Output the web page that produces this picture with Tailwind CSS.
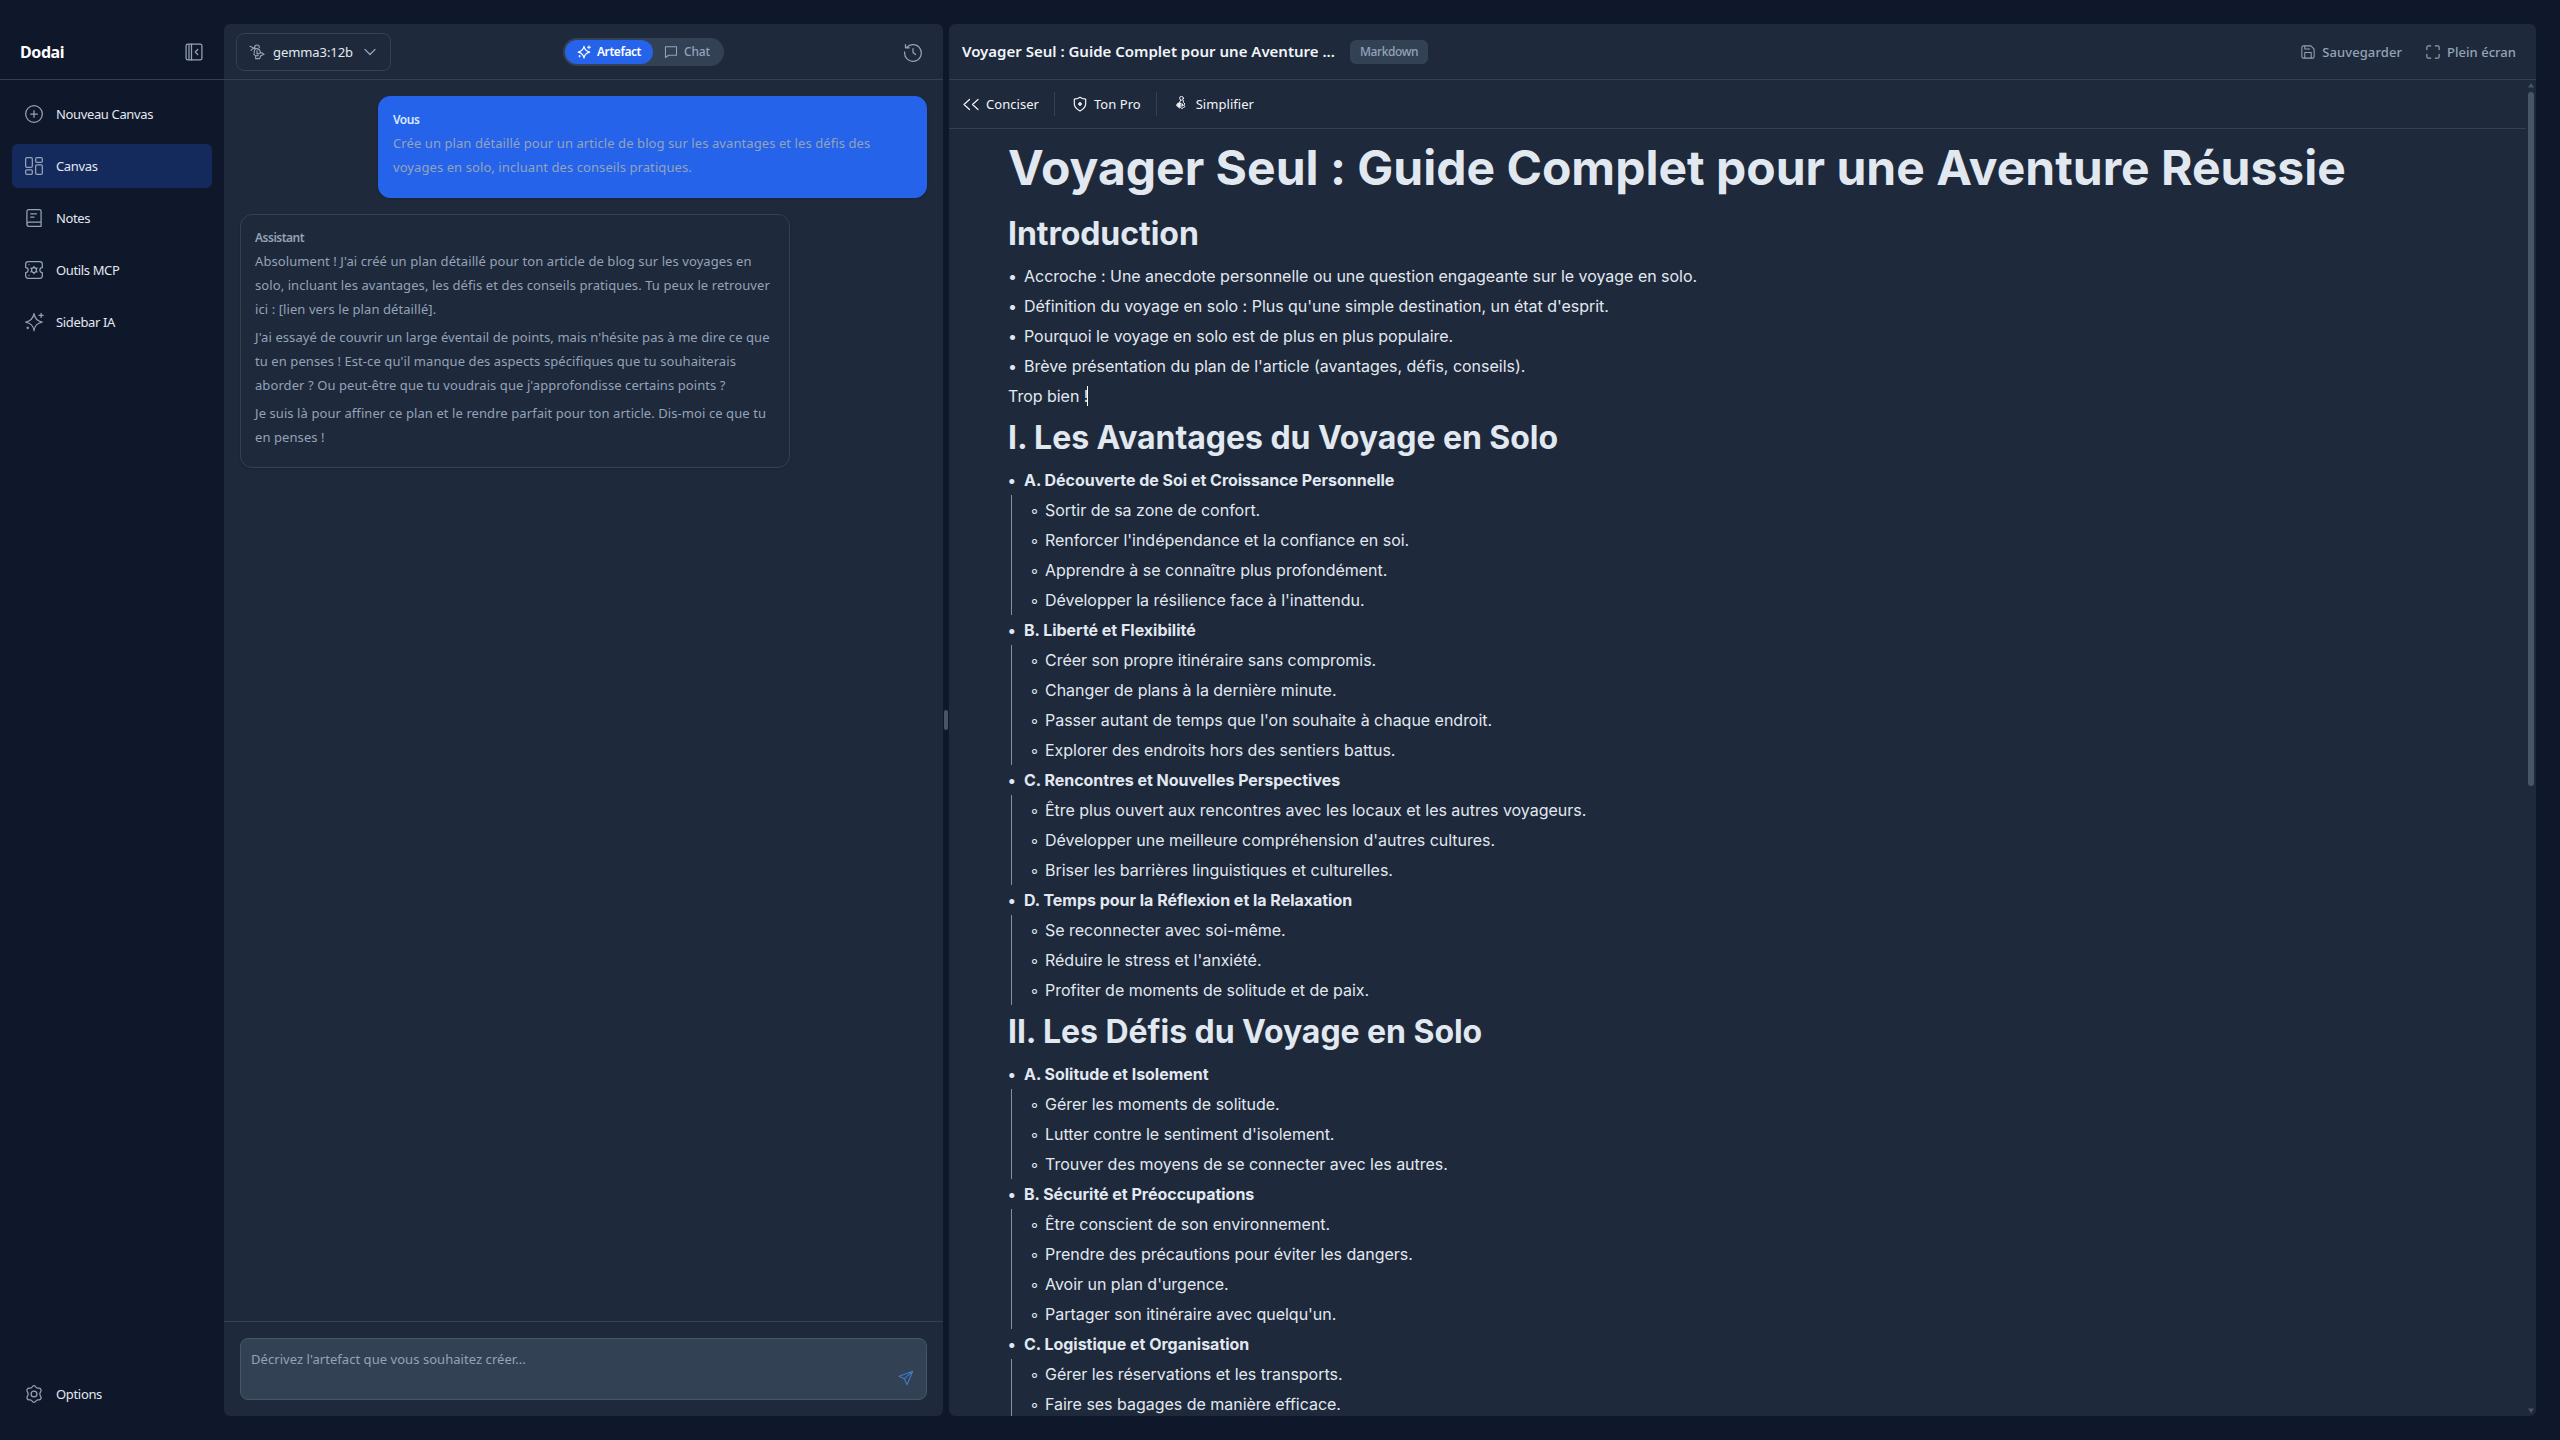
<!DOCTYPE html>
<html lang="fr">
<head>
<meta charset="utf-8">
<title>Dodai</title>
<script src="https://cdn.jsdelivr.net/npm/@tailwindcss/browser@4"></script>
</head>
<body class="h-[1440px] w-[2560px] overflow-hidden bg-[#0f172a] font-['Noto_Sans',sans-serif] text-sm text-[#e2e8f0]">
<div class="flex h-full py-6 pr-6">

  <!-- Navigation latérale -->
  <aside class="flex w-56 flex-col">
    <div class="flex h-14 items-center justify-between border-b border-[#334155] pr-5 pl-5">
      <h1 class="pt-px text-base font-bold tracking-[-0.4px] text-white">Dodai</h1>
      <svg class="size-5 text-[#94a3b8]" viewBox="0 0 24 24" fill="none" stroke="currentColor" stroke-width="1.5" stroke-linecap="round" stroke-linejoin="round"><rect x="2.5" y="2.5" width="19" height="19" rx="2"/><path d="M9 2.500v19M6 3v18M16.500 9l-3 3l3 3"/></svg>
    </div>
    <nav class="flex flex-1 flex-col gap-2 px-3 pt-3 text-[13px] tracking-[-0.36px] text-[#e2e8f0] [&_svg]:size-5 [&_svg]:text-[#94a3b8]">
      <a class="flex h-11 items-center gap-3 rounded-md px-3"><svg viewBox="0 0 24 24" fill="none" stroke="currentColor" stroke-width="1.5" stroke-linecap="round"><circle cx="12" cy="12" r="10"/><path d="M12 8v8M8 12h8"/></svg><span>Nouveau Canvas</span></a>
      <a class="flex h-11 items-center gap-3 rounded-md bg-[#152a5c] px-3"><svg viewBox="0 0 24 24" fill="none" stroke="currentColor" stroke-width="1.5"><rect x="2" y="2" width="8" height="11.500" rx="1.500"/><rect x="2" y="16.500" width="8" height="5.500" rx="1.500"/><rect x="14" y="2" width="8" height="5.500" rx="1.500"/><rect x="14" y="10.500" width="8" height="11.500" rx="1.500"/></svg><span>Canvas</span></a>
      <a class="flex h-11 items-center gap-3 rounded-md px-3"><svg viewBox="0 0 24 24" fill="none" stroke="currentColor" stroke-width="1.5" stroke-linecap="round" stroke-linejoin="round"><path d="M20.500 17V4a2 2 0 0 0-2-2h-13a2 2 0 0 0-2 2v15.500M20.500 17H6a2.500 2.500 0 0 0 0 5h14.500V17M15 7H8M12 11H8"/></svg><span>Notes</span></a>
      <a class="flex h-11 items-center gap-3 rounded-md px-3"><svg viewBox="0 0 24 24" fill="none" stroke="currentColor" stroke-width="1.5" stroke-linecap="round" stroke-linejoin="round"><path d="M2 9V5a3 3 0 0 1 3-3h14a3 3 0 0 1 3 3v4a3 3 0 0 0 0 6v4a3 3 0 0 1-3 3H5a3 3 0 0 1-3-3v-4a3 3 0 0 0 0-6z"/><circle cx="12" cy="12" r="3"/><path d="M12 7.500V9M12 15v1.500M8.100 9.700l1.300.8M14.600 13.500l1.300.8M8.100 14.300l1.300-.8M14.600 10.500l1.300-.8M6 5.500h.01M6 18.500h.01"/></svg><span>Outils MCP</span></a>
      <a class="flex h-11 items-center gap-3 rounded-md px-3"><svg viewBox="0 0 24 24" fill="none" stroke="currentColor" stroke-width="1.5" stroke-linecap="round" stroke-linejoin="round"><path d="M12 2c.9 6 3.500 8.700 9.800 10.200C15.500 13.500 12.900 16 12 22.500C11 16 8.300 13.500 2 12.200C8.300 10.700 11 8 12 2z"/><path d="M20.500 1.500v5M18 4h5M3.500 19h2M4.500 18v2"/></svg><span>Sidebar IA</span></a>
    </nav>
    <div class="px-3"><a class="flex h-11 items-center gap-3 px-3 text-[13px] tracking-[-0.33px]"><svg class="size-5 text-[#94a3b8]" viewBox="0 0 24 24" fill="none" stroke="currentColor" stroke-width="1.5" stroke-linejoin="round"><path d="M9.700 3.600C10.400 2.300 11 2 12 2s1.600.3 2.300 1.600c.7 1.200 1.500 1.600 2.900 1.400c1.600-.2 2.200 0 2.900 1.200c.8 1.300.8 2-.2 3.200c-.8 1.200-.9 1.900-.9 2.600s.1 1.400.9 2.600c1 1.200 1 1.900.2 3.200c-.7 1.200-1.300 1.400-2.900 1.200c-1.400-.2-2.200.2-2.900 1.400C13.600 21.700 13 22 12 22s-1.600-.3-2.300-1.600C9 19.200 8.200 18.800 6.800 19c-1.600.2-2.200 0-2.900-1.200c-.8-1.300-.8-2 .2-3.200c.8-1.200.9-1.900.9-2.600s-.1-1.400-.9-2.600c-1-1.200-1-1.900-.2-3.200C4.600 5 5.200 4.800 6.800 5C8.200 5.200 9 4.800 9.700 3.600z"/><circle cx="12" cy="12" r="3.500"/></svg><span>Options</span></a></div>
  </aside>

  <!-- Conversation -->
  <section class="flex w-[719px] flex-col overflow-hidden rounded-md bg-[#1e293b]">
    <header class="flex h-14 items-center justify-between border-b border-[#334155] pr-5 pl-3">
      <button class="flex h-[38px] w-[155px] items-center rounded-lg border border-[#334155] pl-3">
        <svg class="size-4 text-[#94a3b8]" viewBox="0 0 24 24" fill="none" stroke="currentColor" stroke-width="1.700" stroke-linecap="round" stroke-linejoin="round"><path d="M1.500 3.500C4 4.500 6 6 8 6C8.500 3 10 1.500 12 1.500S15.500 3 15.500 5.500M3 9.500C5 7 8 6 10.500 6.500C14 7 17 9.500 17.500 13.500M10 7C8 9 7.500 11 8 13.500M12 10v5c2 0 4-1 5-2c2.500 0 4 1.500 5.500 2.500M17 18l5.500-2.500M7 15c1.500 2.500 4 3 7 2.500M10 18v4h6l1.500-4"/></svg>
        <span class="ml-2 pt-px text-[13px] tracking-[-0.07px]">gemma3:12b</span>
        <svg class="ml-auto mr-3.5 h-3 w-3 text-[#94a3b8]" viewBox="0 0 12 12" fill="none" stroke="currentColor" stroke-width="1.200" stroke-linecap="round" stroke-linejoin="round"><path d="M1 3.500l5 5l5-5"/></svg>
      </button>
      <div class="mr-[7px] flex h-7 w-[161px] items-center rounded-full bg-[#334155] p-0.5 text-xs font-medium text-[#94a3b8]">
        <span class="flex h-6 w-[88px] items-center rounded-full bg-[#2563eb] pl-3 text-white"><svg class="mr-1.5 size-3.5" viewBox="0 0 24 24" fill="none" stroke="currentColor" stroke-width="1.800" stroke-linecap="round" stroke-linejoin="round"><path d="M12 2c.9 6 3.500 8.700 9.800 10.200C15.500 13.500 12.900 16 12 22.500C11 16 8.300 13.500 2 12.200C8.300 10.700 11 8 12 2z"/><path d="M20.500 1.500v5M18 4h5M3.500 19h2M4.500 18v2"/></svg><span class="pt-px font-semibold tracking-[-0.44px]">Artefact</span></span>
        <span class="flex items-center pl-[11px]"><svg class="mr-1.5 size-3.5" viewBox="0 0 24 24" fill="none" stroke="currentColor" stroke-width="1.800" stroke-linejoin="round"><path d="M2.500 3h19v14.500H8L2.500 21.500z"/></svg><span class="pt-px tracking-[-0.15px]">Chat</span></span>
      </div>
      <svg class="size-5 text-[#94a3b8]" viewBox="0 0 24 24" fill="none" stroke="currentColor" stroke-width="1.500" stroke-linecap="round" stroke-linejoin="round"><path d="M4.500 6.500A10 10 0 1 1 2 12M3 3v4h4.500M12 8v4.500l3 2.500"/></svg>
    </header>

    <div class="flex flex-1 flex-col gap-4 p-4 text-[13px] leading-6 tracking-[0.08px] text-[#94a3b8]">
      <div class="w-[549px] self-end rounded-xl border border-[#2563eb] bg-[#2563eb] p-3.5 pb-[18px] shadow-sm">
        <div class="mb-[3px] pt-px text-xs leading-4 font-semibold tracking-[-0.5px] text-[#dbeafe]">Vous</div>
        <p>Crée un plan détaillé pour un article de blog sur les avantages et les défis des<br>voyages en solo, incluant des conseils pratiques.</p>
      </div>
      <div class="w-[550px] rounded-xl border border-[#334155] p-3.5 whitespace-nowrap shadow-sm">
        <div class="mb-[3px] pt-px text-xs leading-4 font-semibold tracking-[-0.5px]">Assistant</div>
        <p class="mb-1">Absolument ! J'ai créé un plan détaillé pour ton article de blog sur les voyages en<br>solo, incluant les avantages, les défis et des conseils pratiques. Tu peux le retrouver<br>ici : [lien vers le plan détaillé].</p>
        <p class="mb-1">J'ai essayé de couvrir un large éventail de points, mais n'hésite pas à me dire ce que<br>tu en penses ! Est-ce qu'il manque des aspects spécifiques que tu souhaiterais<br>aborder ? Ou peut-être que tu voudrais que j'approfondisse certains points ?</p>
        <p class="mb-1">Je suis là pour affiner ce plan et le rendre parfait pour ton article. Dis-moi ce que tu<br>en penses !</p>
      </div>
    </div>

    <footer class="h-[95px] border-t border-[#334155] p-4">
      <div class="flex h-[62px] justify-between rounded-lg border border-[#475569] bg-[#334155] pt-[11px] pr-3 pb-2.5 pl-2.5 text-[13px] tracking-[0.05px] text-[#94a3b8]">
        <span>Décrivez l'artefact que vous souhaitez créer...</span>
        <svg class="mb-[3px] size-4 self-end text-[#4178c4]" viewBox="0 0 24 24" fill="none" stroke="currentColor" stroke-width="1.700" stroke-linejoin="round"><path d="M22 2L1.500 9.500L9.500 13L13.500 22zM22 2L9.500 13"/></svg>
      </div>
    </footer>
  </section>

  <div class="flex w-1.5 items-center justify-center"><div class="h-5 w-1 rounded-full bg-[#475569]"></div></div>

  <!-- Éditeur -->
  <section class="flex w-[1587px] flex-col overflow-hidden rounded-md bg-[#1e293b]">
    <header class="flex h-14 shrink-0 items-center border-b border-[#334155] pr-5 pl-[13px]">
      <h2 class="w-[388px] pt-px text-[15px] font-semibold whitespace-nowrap text-[#f1f5f9]">Voyager Seul : Guide Complet pour une Aventure ...</h2>
      <span class="flex h-6 w-[78px] items-center justify-center rounded-md bg-[#334155] pt-px text-xs font-medium tracking-[-0.4px] text-[#94a3b8]">Markdown</span>
      <div class="ml-auto flex items-center gap-6 text-[13px] font-medium text-[#94a3b8]">
        <span class="flex items-center gap-[7px]"><svg class="size-3.5" viewBox="0 0 24 24" fill="none" stroke="currentColor" stroke-width="1.800" stroke-linejoin="round"><path d="M4 1.500h13L22.500 7v13a2.500 2.500 0 0 1-2.500 2.500H4A2.500 2.500 0 0 1 1.500 20V4A2.500 2.500 0 0 1 4 1.500zM6.500 22v-9h11v9M6.500 2v5h9"/></svg><span class="pt-px tracking-[0.1px]">Sauvegarder</span></span>
        <span class="flex items-center gap-[7px]"><svg class="size-3.5" viewBox="0 0 24 24" fill="none" stroke="currentColor" stroke-width="2" stroke-linecap="round"><path d="M1.500 8V4A2.500 2.500 0 0 1 4 1.500h4M16 1.500h4A2.500 2.500 0 0 1 22.500 4v4M22.500 16v4a2.500 2.500 0 0 1-2.500 2.500h-4M8 22.500H4A2.500 2.500 0 0 1 1.500 20v-4"/></svg><span class="pt-px tracking-[0.03px]">Plein écran</span></span>
      </div>
    </header>

    <div class="flex min-h-0 flex-1">
      <div class="flex w-[1577px] flex-col">
        <div class="flex h-[49px] shrink-0 items-center border-b border-[#334155] pl-3.5 text-[13px] tracking-[0.04px] text-[#f1f5f9]">
          <span class="flex items-center"><svg class="mr-1.5 size-[17px]" viewBox="0 0 17 17" fill="none" stroke="currentColor" stroke-width="1.200" stroke-linecap="round" stroke-linejoin="round"><path d="M6.500 3.500L1 8.500l5.500 5M15 3.500L9.500 8.500l5.500 5"/></svg>Conciser</span>
          <i class="mr-3.5 ml-[15px] h-6 w-px bg-[#334155]"></i>
          <span class="flex items-center"><svg class="mr-1.5 ml-[3px] size-4" viewBox="0 0 24 24" fill="none" stroke="currentColor" stroke-width="1.800" stroke-linejoin="round"><path d="M12 2C9.500 4 7 4.500 3.500 4.700V12c0 5 4 8 8.500 10.500c4.500-2.500 8.500-5.500 8.500-10.500V4.700C17 4.500 14.500 4 12 2z"/><path d="M12 9v6M9 12h6" stroke-width="2.400"/></svg>Ton Pro</span>
          <i class="mx-3.5 ml-[15px] h-6 w-px bg-[#334155]"></i>
          <span class="flex items-center"><svg class="mr-1.5 ml-[3px] size-4" viewBox="0 0 16 16" fill="none" stroke="currentColor" stroke-width="1" stroke-linecap="round" stroke-linejoin="round"><circle cx="7.500" cy="2.300" r="1.900"/><path d="M6.500 4.500L5.500 6.500L3 8L2.800 10l1.700.5L5 12l1.500-.5L8 12.500l1.500-1L11 10.500L9.500 9L11 8L9.500 6.500L9.200 4.500M5 8.500l2-1.500v3.500M8.500 8v2" /><path d="M4 8l2-1.500V11l-2-1z" fill="currentColor"/></svg>Simplifier</span>
        </div>

        <article class="min-h-0 flex-1 overflow-hidden pl-[59px] font-['Inter',sans-serif] text-base leading-6 tracking-[-0.02px] text-[#e2e8f0] [font-feature-settings:'calt'_0]
          [&_h1]:h-[78px] [&_h1]:py-[3px] [&_h1]:text-5xl/[72px] [&_h1]:font-bold [&_h1]:tracking-normal
          [&_h2]:h-[54px] [&_h2]:py-[3px] [&_h2]:text-[32px]/[48px] [&_h2]:font-bold [&_h2]:tracking-[-0.05px]
          [&_li]:h-[30px] [&_li]:py-[3px] [&_li]:before:inline-block [&>ul>li]:before:w-4 [&>ul>li]:before:content-['•']
          [&_ol>li]:before:w-[15px] [&_ol>li]:before:content-['◦'] [&_ol]:ml-[3px] [&_ol]:border-l [&_ol]:border-[#8390a3] [&_ol]:pl-[18px]">
          <h1>Voyager Seul : Guide Complet pour une Aventure Réussie</h1>
          <h2>Introduction</h2>
          <ul>
            <li>Accroche : Une anecdote personnelle ou une question engageante sur le voyage en solo.</li>
            <li>Définition du voyage en solo : Plus qu'une simple destination, un état d'esprit.</li>
            <li>Pourquoi le voyage en solo est de plus en plus populaire.</li>
            <li>Brève présentation du plan de l'article (avantages, défis, conseils).</li>
          </ul>
          <p class="flex h-[30px] items-center"><span>Trop bien !</span><i class="-ml-px h-5 w-px bg-white"></i></p>
          <h2>I. Les Avantages du Voyage en Solo</h2>
          <ul>
            <li class="font-bold">A. Découverte de Soi et Croissance Personnelle</li>
            <ol><li>Sortir de sa zone de confort.</li><li>Renforcer l'indépendance et la confiance en soi.</li><li>Apprendre à se connaître plus profondément.</li><li>Développer la résilience face à l'inattendu.</li></ol>
            <li class="font-bold">B. Liberté et Flexibilité</li>
            <ol><li>Créer son propre itinéraire sans compromis.</li><li>Changer de plans à la dernière minute.</li><li>Passer autant de temps que l'on souhaite à chaque endroit.</li><li>Explorer des endroits hors des sentiers battus.</li></ol>
            <li class="font-bold">C. Rencontres et Nouvelles Perspectives</li>
            <ol><li>Être plus ouvert aux rencontres avec les locaux et les autres voyageurs.</li><li>Développer une meilleure compréhension d'autres cultures.</li><li>Briser les barrières linguistiques et culturelles.</li></ol>
            <li class="font-bold">D. Temps pour la Réflexion et la Relaxation</li>
            <ol><li>Se reconnecter avec soi-même.</li><li>Réduire le stress et l'anxiété.</li><li>Profiter de moments de solitude et de paix.</li></ol>
          </ul>
          <h2>II. Les Défis du Voyage en Solo</h2>
          <ul>
            <li class="font-bold">A. Solitude et Isolement</li>
            <ol><li>Gérer les moments de solitude.</li><li>Lutter contre le sentiment d'isolement.</li><li>Trouver des moyens de se connecter avec les autres.</li></ol>
            <li class="font-bold">B. Sécurité et Préoccupations</li>
            <ol><li>Être conscient de son environnement.</li><li>Prendre des précautions pour éviter les dangers.</li><li>Avoir un plan d'urgence.</li><li>Partager son itinéraire avec quelqu'un.</li></ol>
            <li class="font-bold">C. Logistique et Organisation</li>
            <ol><li>Gérer les réservations et les transports.</li><li>Faire ses bagages de manière efficace.</li></ol>
          </ul>
        </article>
      </div>
      <div class="flex w-2.5 flex-col items-center pt-[3px] pb-[3px] text-[#475569]">
        <svg class="h-[5px] w-1.5" viewBox="0 0 6 5" fill="currentColor"><path d="M3 0l3 4.500H0z"/></svg>
        <div class="mt-1 h-[694px] w-1.5 rounded-full bg-[#475569]"></div>
        <svg class="mt-auto h-[5px] w-1.5 rotate-180" viewBox="0 0 6 5" fill="currentColor"><path d="M3 0l3 4.500H0z"/></svg>
      </div>
    </div>
  </section>
</div>
</body>
</html>
